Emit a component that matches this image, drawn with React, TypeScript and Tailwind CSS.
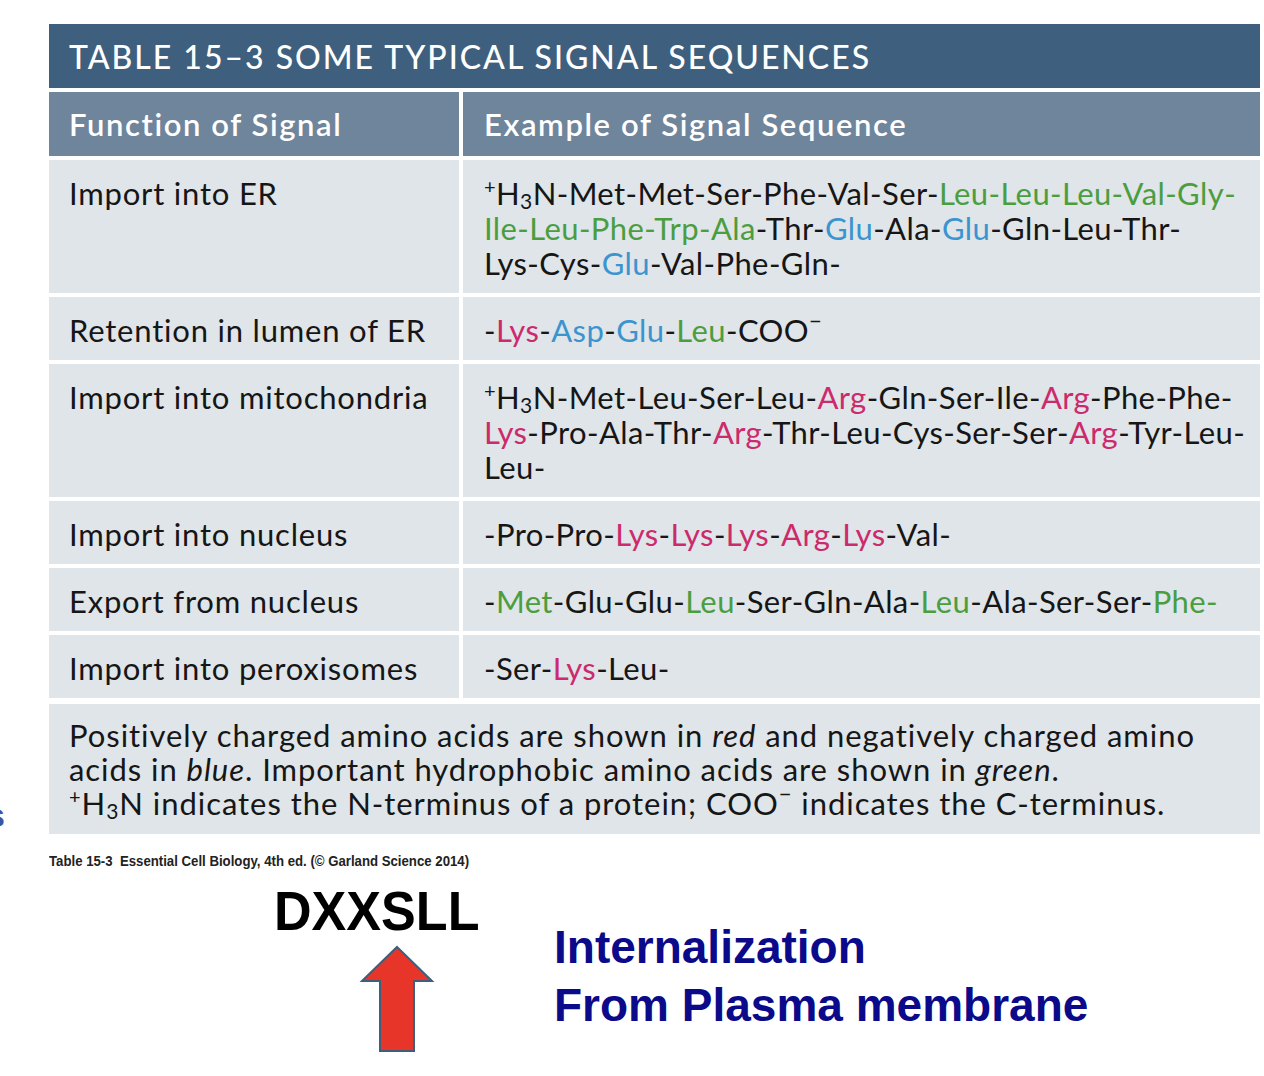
import React from "react";

const G = ({ children }: { children: React.ReactNode }) => <span className="text-[#4b9d3f]">{children}</span>;
const B = ({ children }: { children: React.ReactNode }) => <span className="text-[#3a94cf]">{children}</span>;
const R = ({ children }: { children: React.ReactNode }) => <span className="text-[#cc2a6c]">{children}</span>;

const H3N = () => (
  <>
    <sup className="text-[20px] relative top-[-11px] align-baseline leading-none">+</sup>H<sub className="text-[21px] align-baseline relative top-[4px] leading-none">3</sub>N
  </>
);
const COO = () => (
  <>
    COO<sup className="text-[22px] align-baseline relative top-[-13px] leading-none">−</sup>
  </>
);

const Row = ({ label, children }: { label: string; children: React.ReactNode }) => (
  <div className="flex gap-1">
    <div className="w-[410px] shrink-0 bg-[#dfe5e8] pl-5 pt-4 pb-3 tracking-[0.8px]">{label}</div>
    <div className="flex-1 bg-[#dfe5e8] pl-[21px] pt-4 pb-3 whitespace-nowrap tracking-[0.4px]">{children}</div>
  </div>
);

export default function App() {
  return (
    <div className="w-[1264px] h-[1076px] bg-white relative overflow-hidden" style={{ fontFamily: "Lato, 'Open Sans', sans-serif" }}>
      <div className="absolute left-[-14px] top-[790px] text-[34px] text-[#3b55a0] font-bold" style={{ fontFamily: "'Liberation Sans', sans-serif" }}>s</div>
      <div className="pt-6 pl-[49px] pr-1">
        <div className="flex flex-col gap-1 text-[31px] leading-[35px] text-[#161616] font-normal">
          <div className="h-16 bg-[#3e5f7e] text-white pl-5 flex items-center font-medium text-[32px] tracking-[2px]">
            TABLE 15–3 SOME TYPICAL SIGNAL SEQUENCES
          </div>
          <div className="flex gap-1 h-16 text-white font-semibold tracking-[1.6px]">
            <div className="w-[410px] shrink-0 bg-[#6f859c] pl-5 flex items-center">Function of Signal</div>
            <div className="flex-1 bg-[#6f859c] pl-[21px] flex items-center">Example of Signal Sequence</div>
          </div>
          <Row label="Import into ER">
            <H3N />-Met-Met-Ser-Phe-Val-Ser-<G>Leu-Leu-Leu-Val-Gly-</G>
            <br />
            <G>Ile-Leu-Phe-Trp-Ala</G>-Thr-<B>Glu</B>-Ala-<B>Glu</B>-Gln-Leu-Thr-
            <br />
            Lys-Cys-<B>Glu</B>-Val-Phe-Gln-
          </Row>
          <Row label="Retention in lumen of ER">
            -<R>Lys</R>-<B>Asp</B>-<B>Glu</B>-<G>Leu</G>-<COO />
          </Row>
          <Row label="Import into mitochondria">
            <H3N />-Met-Leu-Ser-Leu-<R>Arg</R>-Gln-Ser-Ile-<R>Arg</R>-Phe-Phe-
            <br />
            <R>Lys</R>-Pro-Ala-Thr-<R>Arg</R>-Thr-Leu-Cys-Ser-Ser-<R>Arg</R>-Tyr-Leu-
            <br />
            Leu-
          </Row>
          <Row label="Import into nucleus">
            -Pro-Pro-<R>Lys</R>-<R>Lys</R>-<R>Lys</R>-<R>Arg</R>-<R>Lys</R>-Val-
          </Row>
          <Row label="Export from nucleus">
            -<G>Met</G>-Glu-Glu-<G>Leu</G>-Ser-Gln-Ala-<G>Leu</G>-Ala-Ser-Ser-<G>Phe-</G>
          </Row>
          <Row label="Import into peroxisomes">
            -Ser-<R>Lys</R>-Leu-
          </Row>
          <div className="mt-[2px] bg-[#dfe5e8] pl-5 pt-[14px] pb-[14px] leading-[34px] whitespace-nowrap tracking-[0.95px]">
            Positively charged amino acids are shown in <i>red</i> and negatively charged amino
            <br />
            acids in <i>blue</i>. Important hydrophobic amino acids are shown in <i>green</i>.
            <br />
            <H3N /> indicates the N-terminus of a protein; <COO /> indicates the C-terminus.
          </div>
        </div>
        <div className="mt-4 text-[15px] font-bold text-[#222] origin-left scale-x-[0.88] whitespace-nowrap" style={{ fontFamily: "'Liberation Sans', sans-serif" }}>
          Table 15-3&nbsp; Essential Cell Biology, 4th ed. (© Garland Science 2014)
        </div>
      </div>
      <div className="flex pl-[274px] mt-[10px]">
        <div className="flex flex-col items-start w-[280px]">
          <div className="text-[56px] leading-[56px] font-bold text-black origin-left scale-x-[0.93] whitespace-nowrap" style={{ fontFamily: "'Liberation Sans', sans-serif" }}>
            DXXSLL
          </div>
          <svg width="76" height="110" viewBox="0 0 76 110" className="ml-[85px] mt-[6px]">
            <polygon points="38,2 73,36 55,36 55,106 21,106 21,36 3,36" fill="#e8352a" stroke="#3d5f7c" strokeWidth="2" strokeLinejoin="miter" />
          </svg>
        </div>
        <div className="pt-[35px] text-[46px] leading-[58px] font-bold text-[#0a0a8a]" style={{ fontFamily: "'Liberation Sans', sans-serif" }}>
          <div>Internalization</div>
          <div>From Plasma membrane</div>
        </div>
      </div>
    </div>
  );
}
